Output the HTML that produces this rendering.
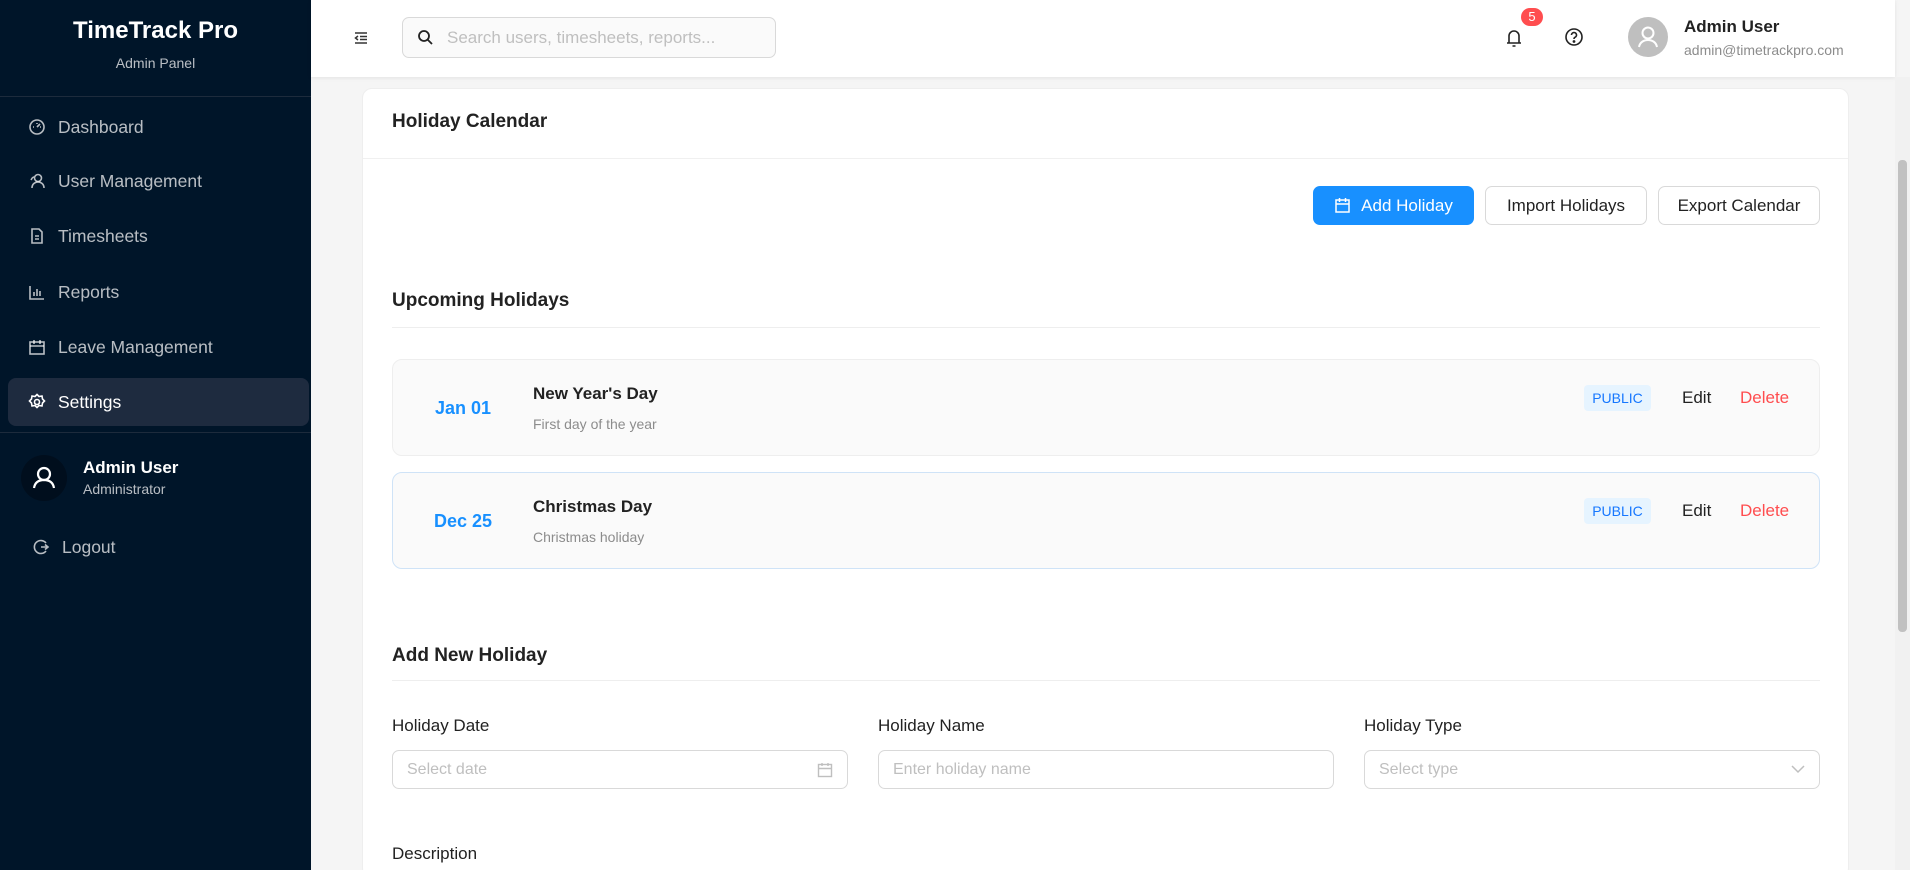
<!DOCTYPE html>
<html style="overflow:hidden"><head><meta charset="utf-8"><style>
*{box-sizing:border-box;margin:0;padding:0}
html,body{width:1910px;height:870px;overflow:hidden}
body{font-family:"Liberation Sans",sans-serif;background:#f5f5f5;position:relative;color:#1f1f1f}
.abs{position:absolute}
.sb{left:0;top:0;width:311px;height:870px;background:#001529;color:#fff}
.mi{position:absolute;left:8px;width:301px;height:48px;display:flex;align-items:center;padding-left:20px;font-size:17.5px;color:rgba(255,255,255,.72)}
.mi svg{width:18px;height:18px;margin-right:12px;stroke:currentColor;fill:none;stroke-width:1.6}
.hd{left:311px;top:0;width:1584px;height:77px;background:#fff;box-shadow:0 1px 4px rgba(0,0,0,.08)}
.card{left:362px;top:88px;width:1487px;height:790px;background:#fff;border:1px solid #eee;border-radius:10px}
.btn{position:absolute;top:186px;height:39px;border:1px solid #d9d9d9;border-radius:7px;background:#fff;font-size:17px;display:flex;align-items:center;justify-content:center;color:#222}
.sec{position:absolute;left:392px;width:1428px;font-size:19px;font-weight:bold;color:#222;border-bottom:1px solid #eee}
.item{position:absolute;left:392px;width:1428px;height:97px;background:#fafafa;border:1px solid #eee;border-radius:10px}
.date{position:absolute;left:0;width:140px;text-align:center;top:38px;font-size:18px;font-weight:bold;color:#1890ff}
.nm{position:absolute;left:140px;top:24px;font-size:17px;font-weight:bold;color:#222}
.ds{position:absolute;left:140px;top:56px;font-size:14px;color:#8c8c8c}
.tag{position:absolute;left:1191px;top:25px;width:67px;height:26px;background:#e6f4ff;color:#1677ff;border-radius:4px;font-size:14px;text-align:center;line-height:26px}
.ed{position:absolute;left:1289px;top:28px;font-size:17px;color:#222}
.dl{position:absolute;left:1347px;top:28px;font-size:17px;color:#ff4d4f}
.lb{position:absolute;top:716px;font-size:17px;color:#222}
.in{position:absolute;top:750px;width:456px;height:39px;border:1px solid #d9d9d9;border-radius:7px;font-size:16px;color:#bfbfbf;padding-left:14px;line-height:37px}
</style></head><body>
<div class="abs sb">
 <div class="abs" style="left:0;width:311px;top:17px;text-align:center;font-size:24px;font-weight:bold">TimeTrack Pro</div>
 <div class="abs" style="left:0;width:311px;top:55px;text-align:center;font-size:14px;color:rgba(255,255,255,.72)">Admin Panel</div>
 <div class="abs" style="left:0;top:96px;width:311px;height:1px;background:#1d2b3c"></div>
 <div class="mi" style="top:103px"><svg viewBox="0 0 18 18"><circle cx="9" cy="9" r="7"/><path d="M9 9l3-3M5 9h1M12 9h1M9 5v1"/></svg>Dashboard</div>
 <div class="mi" style="top:157px"><svg viewBox="0 0 18 18"><circle cx="10" cy="6" r="3.5"/><path d="M4 16c0-4 3-6 6-6s6 2 6 6M3 8c1-2 2-3 3-3"/></svg>User Management</div>
 <div class="mi" style="top:212px"><svg viewBox="0 0 18 18"><path d="M4 2h7l3 3v11H4zM7 9h4M7 12h4"/></svg>Timesheets</div>
 <div class="mi" style="top:268px"><svg viewBox="0 0 18 18"><path d="M2 3v13h14M6 13V9M9 13V6M12 13V8"/></svg>Reports</div>
 <div class="mi" style="top:323px"><svg viewBox="0 0 18 18"><rect x="2" y="4" width="14" height="12"/><path d="M2 8h14M6 2v4M12 2v4"/></svg>Leave Management</div>
 <div class="mi" style="top:378px;background:#1e2b3f;border-radius:8px;color:#fff"><svg viewBox="0 0 18 18"><circle cx="9" cy="9" r="2.5"/><path d="M9 1.5l2 2 3-.5.5 3 2 2-2 2-.5 3-3-.5-2 2-2-2-3 .5-.5-3-2-2 2-2 .5-3 3 .5z"/></svg>Settings</div>
 <div class="abs" style="left:0;top:432px;width:311px;height:1px;background:#1d2b3c"></div>
 <div class="abs" style="left:21px;top:455px;width:46px;height:46px;border-radius:50%;background:#000e1d"><svg viewBox="0 0 46 46" width="46" height="46" fill="none" stroke="#fff" stroke-width="2.2"><circle cx="23" cy="19" r="6"/><path d="M13 33c1-6 5-8 10-8s9 2 10 8"/></svg></div>
 <div class="abs" style="left:83px;top:458px;font-size:17px;font-weight:bold">Admin User</div>
 <div class="abs" style="left:83px;top:481px;font-size:14px;color:rgba(255,255,255,.72)">Administrator</div>
 <div class="mi" style="top:523px;left:12px"><svg viewBox="0 0 18 18"><path d="M14 5a6.5 6.5 0 1 0 0 8M9 9h7M13 6.5L16 9l-3 2.5"/></svg>Logout</div>
</div>
<div class="abs hd">
 <svg class="abs" style="left:42px;top:30px" width="16" height="16" viewBox="0 0 16 16" stroke="#333" stroke-width="1.5" fill="none"><path d="M2 3h12M7 6.5h7M7 9.5h7M2 13h12M5 6l-2.5 2L5 10"/></svg>
 <div class="abs" style="left:91px;top:17px;width:374px;height:41px;border:1px solid #d9d9d9;border-radius:7px;background:#fafafa">
  <svg class="abs" style="left:14px;top:11px" width="17" height="17" viewBox="0 0 17 17" fill="none" stroke="#222" stroke-width="1.8"><circle cx="7" cy="7" r="5"/><path d="M11 11l4 4"/></svg>
  <div class="abs" style="left:44px;top:10px;font-size:17px;color:#bfbfbf">Search users, timesheets, reports...</div>
 </div>
 <svg class="abs" style="left:1194px;top:28px" width="18" height="20" viewBox="0 0 18 20" fill="none" stroke="#222" stroke-width="1.6"><path d="M4 15V8a5 5 0 0 1 10 0v7zM2 15h14M7.5 18h3"/></svg>
 <div class="abs" style="left:1210px;top:8px;height:18px;min-width:22px;border-radius:9px;background:#ff4d4f;color:#fff;font-size:13px;text-align:center;line-height:18px">5</div>
 <svg class="abs" style="left:1253px;top:27px" width="20" height="20" viewBox="0 0 20 20" fill="none" stroke="#222" stroke-width="1.6"><circle cx="10" cy="10" r="8"/><path d="M7.5 8a2.5 2.5 0 1 1 3.5 2.3c-.7.3-1 .8-1 1.7"/><circle cx="10" cy="14.5" r=".6" fill="#222"/></svg>
 <div class="abs" style="left:1317px;top:17px;width:40px;height:40px;border-radius:50%;background:#bfbfbf"><svg width="40" height="40" viewBox="0 0 40 40" fill="none" stroke="#fff" stroke-width="2"><circle cx="20" cy="16" r="5.5"/><path d="M11 30c1-5 5-7 9-7s8 2 9 7"/></svg></div>
 <div class="abs" style="left:1373px;top:17px;font-size:17px;font-weight:bold;color:#222">Admin User</div>
 <div class="abs" style="left:1373px;top:42px;font-size:14px;color:#8c8c8c">admin@timetrackpro.com</div>
</div>
<div class="abs" style="left:1895px;top:77px;width:15px;height:793px;background:#f1f1f1"><div class="abs" style="left:3px;top:83px;width:9px;height:472px;background:#c1c1c1;border-radius:4px"></div></div>
<div class="abs card"></div>
<div class="abs" style="left:363px;top:158px;width:1485px;height:1px;background:#f0f0f0"></div>
<div class="abs" style="left:392px;top:111px;font-size:19px;font-weight:bold;color:#222">Holiday Calendar</div>
<div class="btn" style="left:1313px;width:161px;background:#1890ff;border-color:#1890ff;color:#fff"><svg width="17" height="17" viewBox="0 0 17 17" fill="none" stroke="#fff" stroke-width="1.5" style="margin-right:10px"><rect x="2" y="3" width="13" height="12"/><path d="M2 7h13M5.5 1v4M11.5 1v4"/></svg>Add Holiday</div>
<div class="btn" style="left:1485px;width:162px">Import Holidays</div>
<div class="btn" style="left:1658px;width:162px">Export Calendar</div>
<div class="sec" style="top:290px;height:38px">Upcoming Holidays</div>
<div class="item" style="top:359px"><div class="date">Jan 01</div><div class="nm">New Year's Day</div><div class="ds">First day of the year</div><div class="tag">PUBLIC</div><div class="ed">Edit</div><div class="dl">Delete</div></div>
<div class="item" style="top:472px;border-color:#cfe3f7"><div class="date">Dec 25</div><div class="nm">Christmas Day</div><div class="ds">Christmas holiday</div><div class="tag">PUBLIC</div><div class="ed">Edit</div><div class="dl">Delete</div></div>
<div class="sec" style="top:645px;height:36px">Add New Holiday</div>
<div class="lb" style="left:392px">Holiday Date</div>
<div class="lb" style="left:878px">Holiday Name</div>
<div class="lb" style="left:1364px">Holiday Type</div>
<div class="in" style="left:392px">Select date<svg class="abs" style="right:14px;top:11px" width="16" height="16" viewBox="0 0 16 16" fill="none" stroke="#bfbfbf" stroke-width="1.4"><rect x="1.5" y="2.5" width="13" height="12"/><path d="M1.5 6.5h13M5 1v3M11 1v3"/></svg></div>
<div class="in" style="left:878px">Enter holiday name</div>
<div class="in" style="left:1364px">Select type<svg class="abs" style="right:14px;top:13px" width="14" height="10" viewBox="0 0 14 10" fill="none" stroke="#bfbfbf" stroke-width="1.5"><path d="M1 2l6 6 6-6"/></svg></div>
<div class="lb" style="left:392px;top:844px">Description</div>
</body></html>
